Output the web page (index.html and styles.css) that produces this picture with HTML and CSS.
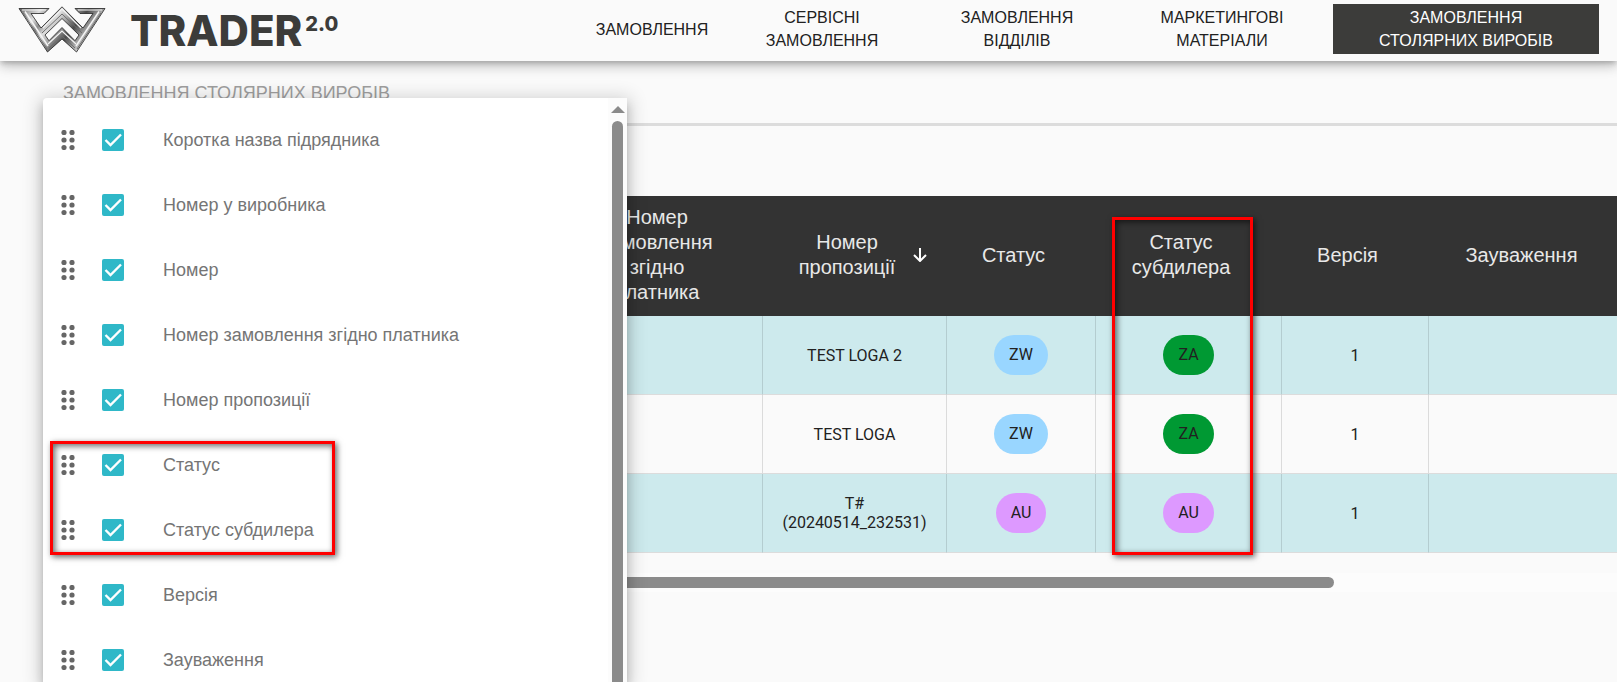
FILE: index.html
```html
<!DOCTYPE html>
<html lang="uk">
<head>
    <meta charset="UTF-8">
    <title>Trader 2.0</title>
    <link rel="stylesheet" href="styles.css">
</head>
<body>
<header class="header">
    <a class="logo" href="#">
        <svg class="logo-mark" viewBox="0 0 88 47" width="88" height="47">
            <defs>
                <linearGradient id="metal" gradientUnits="userSpaceOnUse" x1="0" y1="0" x2="22" y2="18" spreadMethod="reflect">
                    <stop offset="0" stop-color="#4a4a4a"/>
                    <stop offset="0.4" stop-color="#a5a5a5"/>
                    <stop offset="0.7" stop-color="#dedede"/>
                    <stop offset="1" stop-color="#8a8a8a"/>
                </linearGradient>
            </defs>
            <path fill="url(#metal)" stroke="#222" stroke-width="0.8" fill-rule="evenodd"
                  d="M1 2.500H31L26 7.500H13L23 22L44 0.800L65 22L75 7.500H62L57 2.500H87L58.500 46L44 33L29.500 46ZM44 12.500L27 29L31 34.700L44 21.500L57 34.700L61 29Z"/>
            <path d="M4 4H28M60 4H84M25 22L44 3L63 22M30 38L44 25L58 38" fill="none" stroke="#f4f4f4" stroke-width="1.200"/>
            <path d="M7 5.500L30 40M81 5.500L58 40" fill="none" stroke="#f4f4f4" stroke-width="1.500"/>
            <path d="M5 7L29 43M83 7L59 43M24 27L44 8L64 27M31 42L44 30L57 42" fill="none" stroke="#6c6c6c" stroke-width="1"/>
        </svg>
        <span class="logo-text">TRADER<sup>2.0</sup></span>
    </a>
    <nav class="nav">
        <a href="#">ЗАМОВЛЕННЯ</a>
        <a href="#">СЕРВІСНІ<br>ЗАМОВЛЕННЯ</a>
        <a href="#">ЗАМОВЛЕННЯ<br>ВІДДІЛІВ</a>
        <a href="#">МАРКЕТИНГОВІ<br>МАТЕРІАЛИ</a>
        <a class="active" href="#">ЗАМОВЛЕННЯ<br>СТОЛЯРНИХ ВИРОБІВ</a>
    </nav>
</header>

<main class="main">
    <h1 class="title">ЗАМОВЛЕННЯ СТОЛЯРНИХ ВИРОБІВ</h1>

    <div class="table-wrap">
        <table class="orders">
            <colgroup>
                <col class="c-lead">
                <col class="c-payer">
                <col class="c-offer">
                <col class="c-status">
                <col class="c-sub">
                <col class="c-version">
                <col class="c-notes">
            </colgroup>
            <thead>
            <tr>
                <th></th>
                <th>Номер замовлення згідно платника</th>
                <th>
                    <div class="sorted">
                        <span>Номер пропозиції</span>
                        <svg viewBox="0 0 14 14" width="14" height="14"><path d="M7 0V13M1 7L7 13L13 7" fill="none" stroke="#fff" stroke-width="2"/></svg>
                    </div>
                </th>
                <th>Статус</th>
                <th>Статус субдилера</th>
                <th>Версія</th>
                <th>Зауваження</th>
            </tr>
            </thead>
            <tbody>
            <tr>
                <td></td>
                <td></td>
                <td>TEST LOGA 2</td>
                <td><span class="pill zw">ZW</span></td>
                <td><span class="pill za">ZA</span></td>
                <td>1</td>
                <td></td>
            </tr>
            <tr>
                <td></td>
                <td></td>
                <td>TEST LOGA</td>
                <td><span class="pill zw">ZW</span></td>
                <td><span class="pill za">ZA</span></td>
                <td>1</td>
                <td></td>
            </tr>
            <tr>
                <td></td>
                <td></td>
                <td>T#<br>(20240514_232531)</td>
                <td><span class="pill au">AU</span></td>
                <td><span class="pill au">AU</span></td>
                <td>1</td>
                <td></td>
            </tr>
            </tbody>
        </table>
    </div>
    <div class="scroll-x"><div class="thumb"></div></div>
</main>

<!-- меню вибору колонок -->
<div class="menu">
    <ul class="columns" id="columns"></ul>
    <div class="scroll-y">
        <div class="arrow"></div>
        <div class="thumb"></div>
    </div>
</div>

<div class="mark mark-list"></div>
<div class="mark mark-column"></div>

<script src="columns.js"></script>
</body>
</html>
```

FILE: styles.css
```css
*{
    box-sizing: border-box;
    margin: 0;
    padding: 0;
}
body{
    height: 100vh;
    overflow: hidden;
    background: #fafafa;
    font-family: "Liberation Sans", Arial, sans-serif;
    font-size: 16px;
    color: #212121;
}
a{
    color: inherit;
    text-decoration: none;
}

/* header */
.header{
    position: relative;
    display: flex;
    justify-content: space-between;
    height: 61px;
    padding: 4px 18px 0;
    background: #fafafa;
    box-shadow: 0 3px 5px -1px rgba(0,0,0,.2), 0 6px 10px rgba(0,0,0,.14), 0 1px 18px rgba(0,0,0,.12);
}
.logo{
    display: flex;
    align-items: center;
    gap: 24px;
    height: 50px;
}
.logo-text{
    display: flex;
    gap: 3px;
    padding-top: 4px;
    font: 800 42px/50px Inter, sans-serif;
    color: #3c3c3a;
}
.logo-text sup{
    font-size: 20px;
    line-height: 36px;
    vertical-align: top;
}
.nav{
    display: grid;
    grid-template-columns: 138px 202px 188px 222px 266px;
    height: 50px;
    line-height: 23px;
    text-align: center;
}
.nav a{
    display: flex;
    align-items: center;
    justify-content: center;
}
.nav .active{
    background: #3c3c3a;
    color: #fff;
}

/* page */
.main{
    padding-left: 43px;
}
.title{
    height: 65px;
    padding: 20px 20px 0;
    border-bottom: 3px solid #dcdcdc;
    font-size: 18px;
    font-weight: normal;
    line-height: 24px;
    color: #9e9e9e;
}
.table-wrap{
    margin-top: 70px;
    overflow: hidden;
}
.orders{
    width: 1587px;
    table-layout: fixed;
    border-collapse: separate;
    border-spacing: 0;
    text-align: center;
}
.c-lead{ width: 524px; }
.c-payer{ width: 196px; }
.c-offer{ width: 184px; }
.c-status{ width: 149px; }
.c-sub{ width: 186px; }
.c-version{ width: 147px; }
.c-notes{ width: 201px; }
.orders th{
    height: 120px;
    padding: 0 40px 2px 24px;
    background: #333;
    color: #e8e8e8;
    font-size: 20px;
    font-weight: normal;
    line-height: 25px;
}
.sorted{
    display: flex;
    align-items: center;
    gap: 16px;
    margin: 0 -20px 0 10px;
}
.sorted svg{
    flex: none;
}
.orders td{
    height: 79px;
    border-right: 1px solid rgba(0,0,0,.12);
    border-bottom: 1px solid #dcdcdc;
    font-family: Roboto, sans-serif;
    line-height: 19px;
}
.orders tbody tr:nth-child(odd){
    background: #cdeaed;
}
.pill{
    display: inline-block;
    padding: 0 15px;
    border-radius: 20px;
    line-height: 40px;
    vertical-align: middle;
}
.zw{ background: #99d6ff; }
.za{ background: #093; }
.au{ background: #d9f; }

/* scrollbars */
.scroll-x{
    height: 19px;
    margin-top: 20px;
    padding: 4px 0;
    background: #fcfcfc;
}
.scroll-x .thumb{
    width: 82%;
    height: 11px;
    border-radius: 6px;
    background: #8b8b8b;
}
.scroll-y{
    display: flex;
    flex-direction: column;
    align-items: center;
    gap: 8px;
    width: 19px;
    padding-top: 8px;
    background: #fcfcfc;
}
.scroll-y .arrow{
    border: 7px solid transparent;
    border-top: 0;
    border-bottom-color: #8b8b8b;
}
.scroll-y .thumb{
    flex: 1;
    width: 11px;
    border-radius: 6px 6px 0 0;
    background: #8b8b8b;
}

/* columns menu */
.menu{
    position: absolute;
    top: 98px;
    bottom: 0;
    left: 43px;
    display: flex;
    width: 584px;
    overflow: hidden;
    border-radius: 4px 0 0 0;
    background: #fff;
    box-shadow: 0 5px 5px -3px rgba(0,0,0,.2), 0 8px 10px 1px rgba(0,0,0,.14), 0 3px 18px 4px rgba(0,0,0,.16);
}
.columns{
    flex: 1;
    padding-top: 10px;
    list-style: none;
}
.columns li{
    display: flex;
    align-items: center;
    height: 65px;
    padding: 0 0 1px 18px;
}
.columns svg{
    margin-right: 27px;
    fill: #666;
}
.columns input{
    appearance: none;
    width: 22px;
    height: 22px;
    margin-right: 39px;
    border-radius: 2px;
}
.columns input:checked{
    background: #2fb8c8 url("data:image/svg+xml,%3Csvg xmlns='http://www.w3.org/2000/svg' viewBox='0 0 22 22'%3E%3Cpath d='M3.500 11L8.500 16L19 5.500' fill='none' stroke='%23fff' stroke-width='2.400'/%3E%3C/svg%3E");
}
.columns label{
    font-size: 18px;
    color: #757575;
}

/* red frames */
.mark{
    position: absolute;
    border: 3px solid #f00;
    box-shadow: 2px 2px 6px rgba(0,0,0,.6), inset 2px 2px 6px rgba(0,0,0,.6);
}
.mark-list{
    top: 441px;
    left: 50px;
    width: 285px;
    height: 114px;
}
.mark-column{
    top: 217px;
    left: 1112px;
    width: 141px;
    height: 338px;
}
```

FILE: columns.js
```javascript
var columns = [
    'Коротка назва підрядника',
    'Номер у виробника',
    'Номер',
    'Номер замовлення згідно платника',
    'Номер пропозиції',
    'Статус',
    'Статус субдилера',
    'Версія',
    'Зауваження'
];

// шість крапок, за які перетягують рядок
var handle = '<svg viewBox="0 0 14 20" width="14" height="20">' +
    '<circle cx="3" cy="2.500" r="2.600"/><circle cx="11" cy="2.500" r="2.600"/>' +
    '<circle cx="3" cy="10" r="2.600"/><circle cx="11" cy="10" r="2.600"/>' +
    '<circle cx="3" cy="17.500" r="2.600"/><circle cx="11" cy="17.500" r="2.600"/>' +
    '</svg>';

document.getElementById('columns').innerHTML = columns.map(function (name, i) {
    return '<li>' + handle +
        '<input type="checkbox" id="col' + i + '" checked>' +
        '<label for="col' + i + '">' + name + '</label></li>';
}).join('');
```
